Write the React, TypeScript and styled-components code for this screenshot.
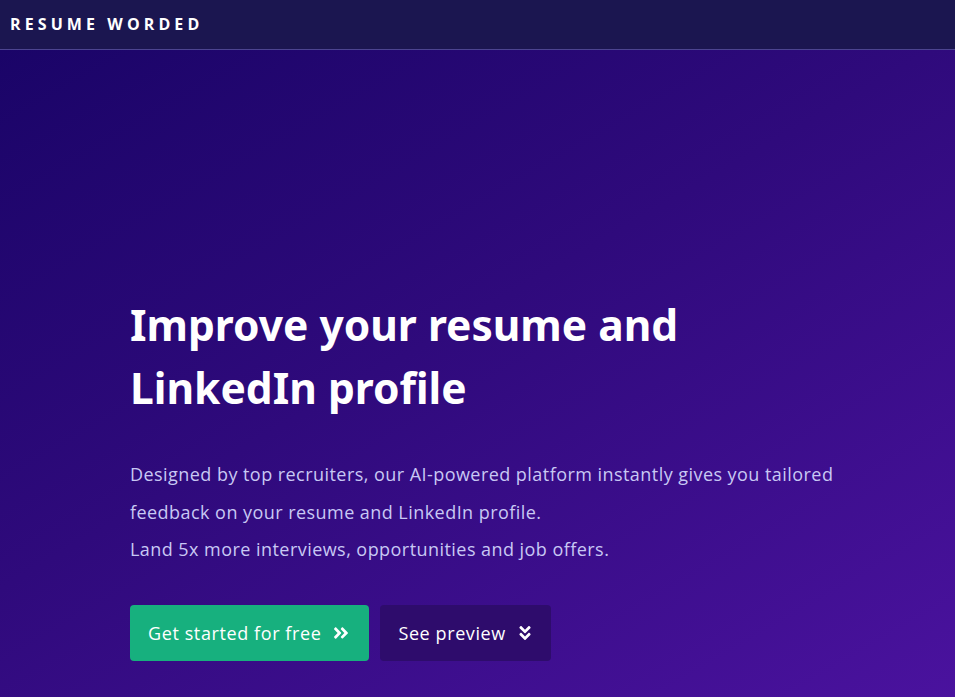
import styled, { createGlobalStyle } from 'styled-components';
import { FaAngleDoubleRight, FaAngleDoubleDown } from 'react-icons/fa';

const GlobalStyle = createGlobalStyle`
  html, body {
    margin: 0;
    padding: 0;
    background: #1b1650;
  }
  * {
    box-sizing: border-box;
  }
`;

const Page = styled.div`
  width: 100%;
  min-height: 100vh;
  display: flex;
  flex-direction: column;
  font-family: 'Open Sans', 'Liberation Sans', sans-serif;
`;

const NavBar = styled.header`
  height: 50px;
  display: flex;
  align-items: center;
  padding: 0 10px;
  background: #1b1650;
  border-bottom: 1px solid #4c4490;
`;

const Logo = styled.div`
  color: #ffffff;
  font-family: 'Open Sans', sans-serif;
  font-weight: 700;
  font-size: 16px;
  letter-spacing: 4.1px;
  margin-top: -2px;
`;

const Hero = styled.section`
  flex: 1;
  display: flex;
  flex-direction: column;
  padding: 243px 0 0 130px;
  background: linear-gradient(150deg, #1a0468 0%, #2f0a7c 45%, #4a129e 100%);
`;

const Title = styled.h1`
  margin: 0;
  color: #ffffff;
  font-family: 'Noto Sans', 'Open Sans', sans-serif;
  font-weight: 700;
  font-size: 42.5px;
  line-height: 63px;
`;

const Lead = styled.p`
  margin: 37px 0 0;
  color: #c8c8f4;
  font-family: 'Open Sans', sans-serif;
  font-size: 18px;
  line-height: 37.5px;
  letter-spacing: 0.45px;
  white-space: nowrap;
`;

const Actions = styled.div`
  display: flex;
  gap: 11px;
  margin-top: 36px;
`;

const Button = styled.button<{ $variant: 'primary' | 'dark' }>`
  height: 56px;
  display: inline-flex;
  align-items: center;
  gap: ${(p) => (p.$variant === 'primary' ? '11px' : '10px')};
  padding: 0 ${(p) => (p.$variant === 'primary' ? '19px' : '17px')} 0 18px;
  border: none;
  border-radius: 4px;
  cursor: pointer;
  color: #ffffff;
  font-family: 'Open Sans', sans-serif;
  font-size: 18px;
  letter-spacing: 0.6px;
  background: ${(p) => (p.$variant === 'primary' ? '#17b07e' : '#2e0c6c')};

  svg {
    width: 18px;
    height: 18px;
  }
`;

export default function App() {
  return (
    <>
      <GlobalStyle />
      <Page>
        <NavBar>
          <Logo>RESUME WORDED</Logo>
        </NavBar>
        <Hero>
          <Title>
            Improve your resume and
            <br />
            LinkedIn profile
          </Title>
          <Lead>
            Designed by top recruiters, our AI-powered platform instantly gives you tailored
            <br />
            feedback on your resume and LinkedIn profile.
            <br />
            Land 5x more interviews, opportunities and job offers.
          </Lead>
          <Actions>
            <Button $variant="primary">
              Get started for free
              <FaAngleDoubleRight />
            </Button>
            <Button $variant="dark">
              See preview
              <FaAngleDoubleDown />
            </Button>
          </Actions>
        </Hero>
      </Page>
    </>
  );
}
